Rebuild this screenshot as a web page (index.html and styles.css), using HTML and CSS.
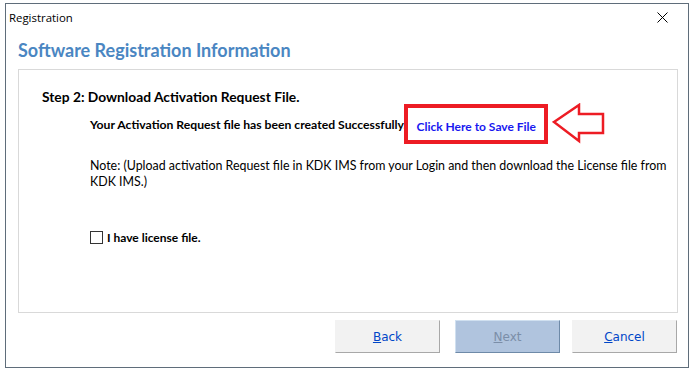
FILE: index.html
```html
<!DOCTYPE html>
<html lang="en">
<head>
  <meta charset="UTF-8">
  <title>Registration</title>
  <link rel="stylesheet" href="styles.css">
</head>
<body>

  <div class="window">
    <!-- Title bar -->
    <div class="titlebar">
      <span class="title">Registration</span>
      <svg class="close" width="11" height="11" viewBox="0 0 11 11">
        <path d="M0.5 0.5 L10.5 10.5 M10.5 0.5 L0.5 10.5" stroke="#000" stroke-width="1" fill="none"/>
      </svg>
    </div>

    <h1 class="heading">Software Registration Information</h1>

    <!-- Step panel -->
    <div class="panel">
      <p class="step">Step 2: Download Activation Request File.</p>

      <div class="created">
        <span class="created-text">Your Activation Request file has been created Successfully.</span>
        <span class="highlight"><a class="save-link" href="#">Click Here to Save File</a></span>
        <svg class="arrow" width="54" height="42" viewBox="0 0 54 42">
          <path d="M2 19 L27 2 L27 11 L51 11 L51 30 L27 30 L27 38 Z" fill="none" stroke="#ed1c24" stroke-width="2.5" stroke-linejoin="miter"/>
        </svg>
      </div>

      <p class="note">Note: (Upload activation Request file in KDK IMS from your Login and then download the License file from KDK IMS.)</p>

      <label class="license">
        <span class="checkbox"></span>
        I have license file.
      </label>
    </div>

    <!-- Buttons -->
    <div class="buttons">
      <button class="button"><u>B</u>ack</button>
      <button class="button button-next"><u>N</u>ext</button>
      <button class="button button-cancel"><u>C</u>ancel</button>
    </div>
  </div>

</body>
</html>
```

FILE: styles.css
```css
body {
  margin: 0;
  background-color: #ffffff;
  font-family: Lato, "Open Sans", sans-serif;
}
.window {
  margin: 3px 0 0 5px;
  width: 682px;
  height: 363px;
  border: 1px solid #5f6d7a;
  background-color: #ffffff;
  display: flex;
  flex-direction: column;
}
.titlebar {
  height: 26px;
  display: flex;
  align-items: center;
  justify-content: space-between;
  padding: 0 20px 0 3px;
}
.title {
  font-family: "Open Sans", sans-serif;
  font-size: 11.4px;
  color: #000000;
}
.heading {
  margin: 9px 0 0 12px;
  height: 30px;
  font-size: 18px;
  font-weight: bold;
  color: #4a86c2;
}
.panel {
  margin: 0 10px 0 12px;
  height: 242px;
  border: 1px solid #d9d9d9;
  padding: 0 0 0 23px;
}
.step {
  margin: 18px 0 0 0;
  font-size: 13.8px;
  font-weight: bold;
  color: #000000;
}
.created {
  margin: -2px 0 0 48px;
  display: flex;
  align-items: center;
}
.created-text {
  font-size: 12.2px;
  font-weight: bold;
}
.highlight {
  margin-left: -2px;
  padding: 7px 8px 6px 8px;
  border: 4px solid #ed1c24;
}
.save-link {
  font-size: 12px;
  font-weight: bold;
  color: #1818f0;
  text-decoration: none;
}
.arrow {
  margin-left: 4px;
}
.note {
  margin: 13px 0 0 48px;
  padding-right: 8px;
  font-size: 12.4px;
  line-height: 16px;
}
.license {
  margin: 40px 0 0 48px;
  display: flex;
  align-items: center;
  font-size: 12px;
  font-weight: bold;
}
.checkbox {
  width: 11px;
  height: 11px;
  border: 1px solid #333333;
  margin-right: 4px;
}
.buttons {
  display: flex;
  justify-content: flex-end;
  padding: 7px 11px 0 0;
}
.button {
  width: 105px;
  height: 33px;
  margin-left: 15px;
  background-color: #f2f2f2;
  border: 1px solid #f2f2f2;
  border-right-color: #a8a8a8;
  border-bottom-color: #a8a8a8;
  font-family: Tahoma, "DejaVu Sans", sans-serif;
  font-size: 12px;
  color: #0046c8;
}
.button-next {
  background-color: #b0c4de;
  border-color: #d0e0f0 #6e8aa8 #6e8aa8 #d0e0f0;
  color: #7b8ea8;
}
.button-cancel {
  margin-left: 12px;
}
```
